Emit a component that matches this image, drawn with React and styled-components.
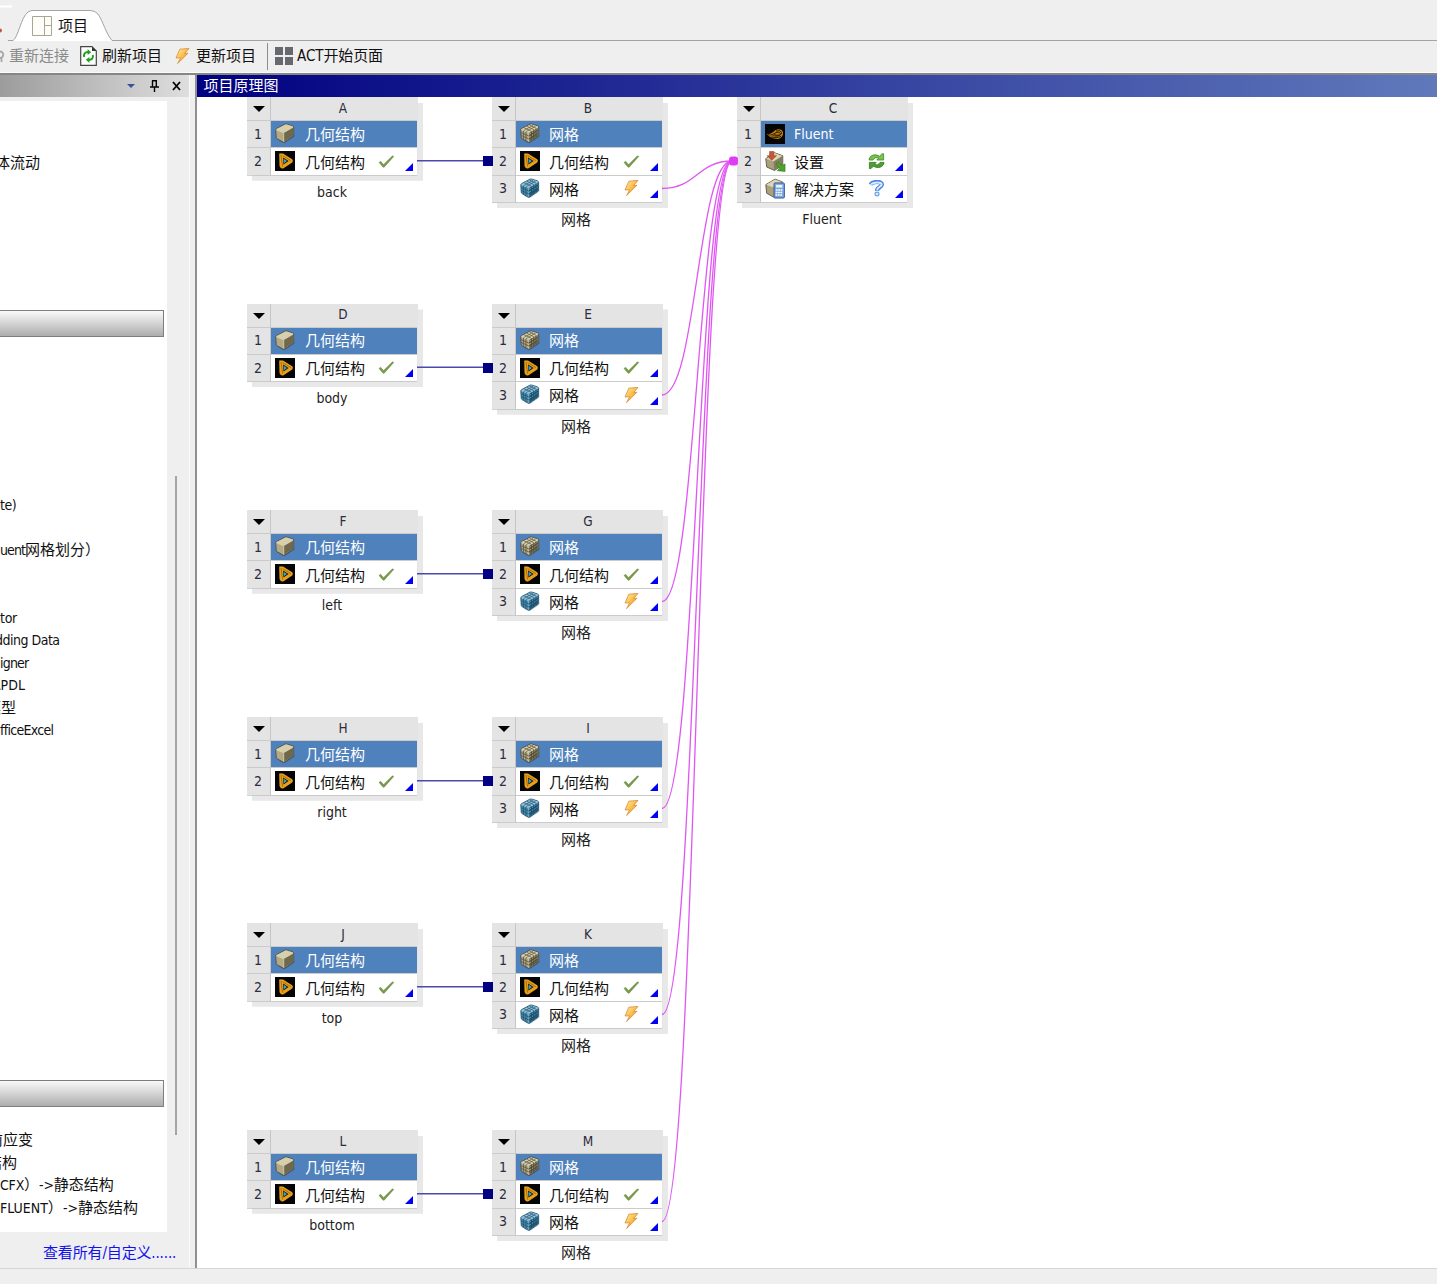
import React from "react";
import styled, { createGlobalStyle } from "styled-components";

const Global = createGlobalStyle`
  * { box-sizing: border-box; }
  html, body { margin: 0; padding: 0; background: #efefef; }
  body {
    overflow: hidden;
    font-family: "DejaVu Sans Condensed", "Noto Sans CJK SC", sans-serif;
    font-stretch: condensed;
    font-size: 14px;
    color: #111;
  }
  svg { display: block; flex: none; }
`;

/* ---------- icons ---------- */

const Cube = ({ tone, mesh }) => {
  const c = tone === "blue"
    ? { top: "#8fc0d8", front: "#4a8cb0", side: "#255f80", line: "#1b4a66", hi: "#9fd0e6" }
    : { top: "#d6cfae", front: "#b3aa85", side: "#6f684d", line: "#4b4532", hi: "#e0d9b8" };
  return (
    <svg width="20" height="21" viewBox="0 0 21 22">
      <path d="M4 18.5 10 21.2 20.4 14.5V12z" fill="#000" opacity=".2" />
      <path d="M.8 7.6Q.7 6.4 1.7 5.8L10.4 1.2Q11.4.8 12.4 1.1L18.4 3Q19.6 3.5 19.6 4.8V12.2Q19.6 13.4 18.7 14L10.4 19.9Q9.4 20.5 8.4 20L2.4 16.6Q1.4 16 1.3 15z" fill={c.front} stroke={c.line} strokeWidth=".8" />
      <path d="M1.5 7Q1.6 6.4 2.2 6L10.6 1.7Q11.4 1.3 12.2 1.6L18.2 3.5Q18.9 3.8 19 4.4L9.8 10.2 8.6 10z" fill={c.top} />
      <path d="M9.2 10.2 19.2 4.4V12.4Q19.1 13.2 18.5 13.7L9.5 20z" fill={c.side} />
      <path d="M1.6 7.2 8.4 10Q9.2 10.4 9.2 11.4V19.6M9 10.2 18.9 4.5" fill="none" stroke={c.hi} strokeWidth=".8" opacity=".9" />
      {mesh && (
        <g fill="none" opacity=".8">
          <path d="M3.6 8.3V16.8M6.2 9.3V18.4M1.4 10.2 9.2 13.6M1.6 13.2 9.3 16.7M12 8.8V18M14.4 7.4V16.5M16.8 6V14.8M9.2 13.6 19.3 7.2M9.3 16.8 19.3 10" stroke={c.line} strokeWidth=".9" />
          <path d="M4.4 5.1 11.8 8.5M7.3 3.5 14.6 7M10 2.1 17 5.5M3.8 8 13.6 2.5M6.4 9.1 16.3 3.3" stroke={c.line} strokeWidth=".8" />
          <path d="M10 11.6 11.4 10.8M12.7 10 13.8 9.3M15.1 8.6 16.2 7.9M17.4 7.2 18.5 6.4M10 14.8 11.4 13.9M12.7 13.1 13.8 12.4M15.1 11.6 16.2 10.9M17.4 10.1 18.5 9.4" stroke={c.hi} strokeWidth=".9" opacity=".75" />
        </g>
      )}
    </svg>
  );
};

const GeometryApp = () => (
  <svg width="20" height="20" viewBox="0 0 20 20">
    <rect width="20" height="20" fill="#050505" />
    <path d="M4.2 3.4Q4.2 2 5.6 2.4L8 2.6 17.2 8.2Q18.7 9.8 17.2 11.4L8.6 17.2Q6.8 18 5.6 16.8Q4.6 15.8 4.5 14.4z" fill="#e8a01a" />
    <path d="M8 6.6 13.6 10 8.5 13.6z" fill="#161208" />
    <path d="M8.6 7.8 12 10 8.9 12.2z" fill="#35a5d6" />
    <path d="M6 4 7.6 15.6M7.6 4.6 15.8 9.6" stroke="#8a5a08" strokeWidth=".7" fill="none" />
  </svg>
);

const FluentApp = () => (
  <svg width="20" height="20" viewBox="0 0 20 20">
    <rect width="20" height="20" fill="#050505" />
    <path d="M2 9.8C5 10.8 7 8.8 9.6 6.8 12 5 16.4 4.4 17.8 7.6 19 11 16.4 14.8 12.6 15 8.6 15.2 4 13.2 2 9.8z" fill="#bd7c10" />
    <path d="M3 10.6C7 12 9 9 12 8.4 14.4 8 15.8 9.2 15.4 10.6 14.6 12.8 9.8 12 7.6 11.6M9 9.8C11 12 15 11.8 17 9M6 12.8C9 14.2 13 13.8 16 12.4M11 7Q15 5.6 17 8.6" fill="none" stroke="#251500" strokeWidth=".9" />
  </svg>
);

const SetupIcon = () => (
  <svg width="21" height="21" viewBox="0 0 22 22">
    <path d="M.8 8 10 1.8 18.6 5V14.4L10 20.4 1.8 16.8z" fill="#aaa17c" stroke="#57503b" strokeWidth=".9" strokeLinejoin="round" />
    <path d="M1.3 8 10 2.2 18.2 5.2 9 11z" fill="#ddd6b6" />
    <path d="M9 11 18.4 5.2V14.2L9.6 20.2z" fill="#857d60" />
    <path d="M4.8.4h4.4V5H12L7 9.8 2.2 5h2.6z" fill="#c4573a" stroke="#9a3a22" strokeWidth=".6" />
    <path d="M11.4 13.6 13.8 11.6 17.8 15.2 21 13.6V21.4L13 20.6 15.2 17.8z" fill="#4ba52c" stroke="#2c7315" strokeWidth=".6" />
  </svg>
);

const SolutionIcon = () => (
  <svg width="21" height="21" viewBox="0 0 22 22">
    <path d="M.8 7 10.5 1.2 18 4V14L9 20 1.8 16z" fill="#aaa17c" stroke="#57503b" strokeWidth=".9" strokeLinejoin="round" />
    <path d="M1.3 7 10.5 1.6 17.6 4.3 8 9.8z" fill="#ddd6b6" />
    <rect x="9.5" y="5.2" width="10.8" height="15.8" rx="1" fill="#7ea6dc" stroke="#2c5798" />
    <rect x="11.6" y="7.2" width="6.6" height="2.8" fill="#e8f2fd" />
    <path d="M11.4 12.6h1.8m.7 0h1.8m.7 0h1.8m-7 2.6h1.8m.7 0h1.8m.7 0h1.8m-7 2.6h1.8m.7 0h1.8m.7 0h1.8" stroke="#fff" strokeWidth="1.7" />
  </svg>
);

const Check = () => (
  <svg width="17" height="14" viewBox="0 0 17 14">
    <path d="M1 7.4 2.6 6.2 5.6 9.6 14.4 .8 15.8 1.4 6.2 12.2H5z" fill="#7a9c4c" stroke="#5f8234" strokeWidth=".4" />
  </svg>
);

const Bolt = () => (
  <svg width="15" height="17" viewBox="0 0 15 17">
    <defs>
      <linearGradient id="bolt" x1="0" y1="0" x2="1" y2="1">
        <stop offset="0" stopColor="#fff0a8" />
        <stop offset=".5" stopColor="#f9bd4a" />
        <stop offset="1" stopColor="#d9720d" />
      </linearGradient>
    </defs>
    <path d="M4.8 1.2 14 .4 9.6 5.6 13 5.2 2.6 15.6 5.6 9.8 1 10z" fill="url(#bolt)" stroke="#d98c3a" strokeWidth=".8" strokeLinejoin="round" />
  </svg>
);

const Refresh = () => (
  <svg width="17" height="17" viewBox="0 0 17 17">
    <path d="M1 7C1.4 2.2 7 .4 11.6 3.2L14 .8H15.6V7H8.8L10.6 5C8.4 4.2 6 4.6 5 7z" fill="#7cc04f" stroke="#3a8a26" strokeWidth=".8" />
    <path d="M16 9.4C15.6 14.2 10 16 5.4 13.2L3 15.6H1.4V9.4H8.2L6.4 11.4C8.6 12.2 11 11.8 12 9.4z" fill="#4f9d33" stroke="#2d7a1c" strokeWidth=".8" />
  </svg>
);

const Question = () => (
  <svg width="16" height="17" viewBox="0 0 16 17">
    <path d="M1.4 4.6C3.4 1.2 13.2 1 12.9 4.6 12.6 7.4 8 7 8 11" fill="none" stroke="#4583de" strokeWidth="4.2" />
    <path d="M2 4.6C4 1.9 13 1.6 12.7 4.6 12.4 6.8 8 7 8 10.4" fill="none" stroke="#d9eaff" strokeWidth="2" />
    <rect x="6.1" y="12.2" width="3.8" height="3.6" rx="1" fill="#d9eaff" stroke="#4583de" />
  </svg>
);

const Caret = styled.i`
  width: 0;
  height: 0;
  border-left: ${(p) => p.$w / 2}px solid transparent;
  border-right: ${(p) => p.$w / 2}px solid transparent;
  border-top: ${(p) => p.$w / 2}px solid ${(p) => p.$c};
`;

/* ---------- frame ---------- */

const Window = styled.div`
  width: 1437px;
  height: 1284px;
  display: flex;
  flex-direction: column;
  background: #efefef;
  overflow: hidden;
`;

const TabStrip = styled.div`
  height: 41px;
  flex: none;
  position: relative;
  display: flex;
  overflow: hidden;
`;

const TabOutline = styled.svg`
  position: absolute;
  left: 0;
  top: 0;
`;

const TabLabel = styled.div`
  position: relative;
  display: flex;
  align-items: center;
  gap: 6px;
  height: 32px;
  margin: 10px 0 0 32px;
  font-size: 15px;

  span { margin-bottom: 3px; }
`;

const Toolbar = styled.div`
  height: 32px;
  flex: none;
  display: flex;
  align-items: center;
  padding-bottom: 1px;
  border-bottom: 1px solid #fafafa;
  font-size: 15px;
  white-space: nowrap;
`;

const Tool = styled.div`
  display: flex;
  align-items: center;
  gap: ${(p) => p.$gap}px;
  margin-left: ${(p) => p.$left}px;
  color: ${(p) => (p.$off ? "#8a8a8a" : "#111")};
  letter-spacing: ${(p) => p.$ls || 0}px;

  span { margin-bottom: 3px; }
`;

const ToolRule = styled.div`
  width: 1px;
  height: 27px;
  margin-left: 11px;
  background: #8d8d8d;
`;

const Body = styled.div`
  height: 1195px;
  flex: none;
  display: flex;
  border-top: 2px solid #868686;
`;

const Side = styled.aside`
  width: 190px;
  flex: none;
  display: flex;
  flex-direction: column;
  border-right: 1px solid #fafafa;
`;

const SideHead = styled.div`
  height: 22px;
  flex: none;
  display: flex;
  align-items: center;
  justify-content: flex-end;
  gap: 13px;
  padding-right: 8px;
  background: linear-gradient(90deg, #9c9c9c, #dedede);

  i { margin-right: 2px; }
`;

const SideMain = styled.div`
  display: flex;
  height: 1131px;
  margin-top: 4px;
`;

const SideList = styled.div`
  width: 167px;
  height: 1131px;
  background: #fff;
  overflow: hidden;
  display: flex;
  flex-direction: column;
  padding-top: 51px;
`;

const SideItem = styled.div`
  height: 22.5px;
  flex: none;
  line-height: 22.5px;
  margin-top: ${(p) => p.$top || 0}px;
  margin-left: ${(p) => p.$shift || 0}px;
  letter-spacing: ${(p) => p.$ls || 0}px;
  white-space: pre;

  b { font-weight: 400; font-size: 15px; letter-spacing: 0; }
`;

const SideGroup = styled.div`
  width: 164px;
  height: 27px;
  flex: none;
  margin-top: ${(p) => p.$top}px;
  border: 1px solid #7e7e7e;
  border-left: 0;
  background: linear-gradient(#fafafa, #adadad);
`;

const ScrollTrack = styled.div`
  width: 22px;
  padding: 375px 0 0 8px;
`;

const ScrollThumb = styled.div`
  width: 2px;
  height: 659px;
  background: #a5a5a5;
`;

const SideLink = styled.a`
  display: block;
  padding-left: 43px;
  height: 36px;
  line-height: 42px;
  font-size: 15px;
  letter-spacing: -0.15px;
  color: #1212ee;
  white-space: nowrap;
`;

const Main = styled.main`
  flex: 1;
  margin-left: 5px;
  border-left: 2px solid #909090;
  display: flex;
  flex-direction: column;
`;

const MainHead = styled.div`
  height: 22px;
  flex: none;
  line-height: 22px;
  padding-left: 6.5px;
  font-size: 15px;
  color: #fff;
  background: linear-gradient(90deg, #000080, #6079bb);
`;

const Canvas = styled.div`
  flex: 1;
  position: relative;
  background: #fff;
  overflow: hidden;
`;

const StatusBar = styled.div`
  flex: 1;
  border-top: 1px solid #d6d6d6;
`;

/* ---------- systems ---------- */

const Node = styled.div`
  position: absolute;
  left: ${(p) => p.$x}px;
  top: ${(p) => p.$y}px;
  width: 171px;
`;

const Card = styled.div`
  width: 171px;
  background: #e4e4e4;
  box-shadow: 5px 5px 0 #e8e8e8;
  padding-right: 1px;
  clip-path: polygon(0 0, 100% 0, 100% 6px, calc(100% + 5px) 6px, calc(100% + 5px) calc(100% + 5px), 5px calc(100% + 5px), 5px 100%, 0 100%);
`;

const Line = styled.div`
  display: flex;
  height: ${(p) => (p.$head ? 24 : 27.4)}px;
`;

const Num = styled.div`
  width: 24px;
  flex: none;
  display: flex;
  align-items: center;
  justify-content: center;
  border-right: 1px solid #c6c6c6;
  border-bottom: 1px solid #cbcbcb;
  color: #2c2c3c;
  padding: ${(p) => (p.$caret ? "1px 0 0 0" : "0 1px 1px 0")};
`;

const Letter = styled.div`
  flex: 1;
  display: flex;
  align-items: center;
  justify-content: center;
  padding: 0 2px 2px 0;
  border-bottom: 1px solid #cbcbcb;
  color: #2c2c3c;
  font-size: 13.5px;
`;

const Cell = styled.div`
  flex: 1;
  display: flex;
  align-items: center;
  padding-left: 4px;
  font-size: ${(p) => (p.$latin ? 14 : 15)}px;
  color: ${(p) => (p.$title ? "#fff" : "#111")};
  background: ${(p) => (p.$title ? "#4f81bc" : "#fff")};
  border-bottom: 1px solid #cbcbcb;
  white-space: nowrap;
`;

const IconSlot = styled.span`
  width: 21px;
  flex: none;
  margin-bottom: 1px;
`;

const CellText = styled.span`
  width: ${(p) => p.$w}px;
  flex: none;
  margin-left: ${(p) => p.$gap}px;
  margin-bottom: ${(p) => (p.$title ? 2 : 1)}px;
`;

const StateSlot = styled.span`
  width: 17px;
  flex: none;
  display: flex;
  justify-content: center;
`;

const Corner = styled.i`
  align-self: flex-end;
  margin: 0 0 4px 10px;
  border-left: 8px solid transparent;
  border-bottom: 8px solid #0000f5;
`;

const Caption = styled.div`
  margin-top: ${(p) => (p.$cjk ? 7 : 6)}px;
  width: ${(p) => (p.$cjk ? 168 : 170)}px;
  text-align: center;
  line-height: 20px;
  font-size: ${(p) => (p.$cjk ? 15 : 14)}px;
  color: #222;
`;

const Links = styled.svg`
  position: absolute;
  left: 0;
  top: 0;
`;

const icons = {
  geo: <Cube />,
  mesh: <Cube mesh />,
  meshBlue: <Cube mesh tone="blue" />,
  app: <GeometryApp />,
  fluent: <FluentApp />,
  setup: <SetupIcon />,
  solution: <SolutionIcon />,
};
const states = { ok: <Check />, bolt: <Bolt />, refresh: <Refresh />, ask: <Question /> };

const geometryRows = [
  { icon: "geo", text: "几何结构", title: true },
  { icon: "app", text: "几何结构", state: "ok" },
];
const meshRows = [
  { icon: "mesh", text: "网格", title: true },
  { icon: "app", text: "几何结构", state: "ok" },
  { icon: "meshBlue", text: "网格", state: "bolt" },
];
const fluentRows = [
  { icon: "fluent", text: "Fluent", title: true, latin: true },
  { icon: "setup", text: "设置", state: "refresh" },
  { icon: "solution", text: "解决方案", state: "ask" },
];

const System = ({ x, y, letter, rows, caption, gap, cjk }) => (
  <Node $x={x} $y={y}>
    <Card>
      <Line $head>
        <Num $caret><Caret $w={12} $c="#000" /></Num>
        <Letter>{letter}</Letter>
      </Line>
      {rows.map((r, i) => (
        <Line key={i}>
          <Num>{i + 1}</Num>
          <Cell $title={r.title} $latin={r.latin}>
            <IconSlot>{icons[r.icon]}</IconSlot>
            <CellText $gap={gap} $w={82 - gap} $title={r.title && !r.latin}>{r.text}</CellText>
            {r.state && <StateSlot>{states[r.state]}</StateSlot>}
            {r.state && <Corner />}
          </Cell>
        </Line>
      ))}
    </Card>
    <Caption $cjk={cjk}>{caption}</Caption>
  </Node>
);

const pairs = [
  ["A", "B", "back", 0],
  ["D", "E", "body", 206.5],
  ["F", "G", "left", 413],
  ["H", "I", "right", 620],
  ["J", "K", "top", 826],
  ["L", "M", "bottom", 1033],
];

export default function App() {
  return (
    <>
      <Global />
      <Window>
        <TabStrip>
          <TabOutline width="1437" height="41" viewBox="0 0 1437 41">
            <path d="M0 6.5H12" stroke="#fff" strokeWidth="2" />
            <circle cx="0" cy="30.5" r="2" fill="#c0563c" />
            <path d="M8 40.5H13C18 38 21 17 28 12Q30 10.5 33 10.5H90Q95 10.5 98 14C103 21 106 34 112 40.5H1437V41H8z" fill="#fff" />
            <path d="M8 40.5H13C18 38 21 17 28 12Q30 10.5 33 10.5H90Q95 10.5 98 14C103 21 106 34 112 40.5H1437" fill="none" stroke="#a3a3a3" />
          </TabOutline>
          <TabLabel>
            <svg width="20" height="20" viewBox="0 0 20 20">
              <path d="M.5.5h19v19H.5zM12.5.5v19M12.5 9.5h7" fill="#fdfdfa" stroke="#aaa590" />
            </svg>
            <span>项目</span>
          </TabLabel>
        </TabStrip>
        <Toolbar>
          <Tool $left={0} $gap={4} $off>
            <svg width="5" height="14" viewBox="0 0 5 14">
              <path d="M0 2.5A3.2 3.2 0 0 1 0 9M1.5 9v4" fill="none" stroke="#a8a8a8" strokeWidth="1.8" />
            </svg>
            <span>重新连接</span>
          </Tool>
          <Tool $left={11} $gap={5}>
            <svg width="17" height="20" viewBox="0 0 17 20">
              <path d="M.7.7H12L16.3 5V19.3H.7z" fill="#fff" stroke="#444" strokeWidth="1.2" />
              <path d="M12 .7V5h4.3z" fill="#333" />
              <path d="M4.2 11C3.4 7.6 5.4 5.8 8.2 6" fill="none" stroke="#22a022" strokeWidth="2" />
              <path d="M7.6 3 11.2 6.2 7.6 9zM9.4 11 5.8 13.8 9.4 17z" fill="#22a022" />
              <path d="M12.8 9C13.6 12.4 11.6 14 8.8 13.9" fill="none" stroke="#22a022" strokeWidth="2" />
            </svg>
            <span>刷新项目</span>
          </Tool>
          <Tool $left={13} $gap={6}>
            <Bolt />
            <span>更新项目</span>
          </Tool>
          <ToolRule />
          <Tool $left={7} $gap={4} $ls={-0.1}>
            <svg width="18" height="18" viewBox="0 0 18 18">
              <path d="M0 0h8v8H0zM10 0h8v8h-8zM0 10h8v8H0zM10 10h8v8h-8z" fill="#68696d" />
            </svg>
            <span>ACT开始页面</span>
          </Tool>
        </Toolbar>
        <Body>
          <Side>
            <SideHead>
              <Caret $w={8} $c="#3a4f9c" />
              <svg width="9" height="12" viewBox="0 0 9 12">
                <path d="M2 .8h5M2.5.5v6M6.3.5v6M0 7h9M4.5 7v5" fill="none" stroke="#000" strokeWidth="1.4" />
              </svg>
              <svg width="9" height="10" viewBox="0 0 9 10">
                <path d="M1 1 8 9M8 1 1 9" stroke="#000" strokeWidth="1.8" />
              </svg>
            </SideHead>
            <SideMain>
              <SideList>
                <SideItem $shift={-5}><b>体流动</b></SideItem>
                <SideGroup $top={135.5} />
                <SideItem $top={157} $ls={-0.5}>te)</SideItem>
                <SideItem $top={22.5} $ls={-0.9}>uent<b>网格划分）</b></SideItem>
                <SideItem $top={45} $ls={-0.3}>tor</SideItem>
                <SideItem $shift={-5} $ls={-0.5}>dding Data</SideItem>
                <SideItem $ls={-0.8}>igner</SideItem>
                <SideItem $shift={-8}>APDL</SideItem>
                <SideItem $shift={-14}><b>模型</b></SideItem>
                <SideItem $ls={-0.7}>fficeExcel</SideItem>
                <SideGroup $top={338} />
                <SideItem $top={22.5} $shift={-12}><b>前应变</b></SideItem>
                <SideItem $shift={-13}><b>结构</b></SideItem>
                <SideItem $ls={-0.2}>CFX<b>）</b>-&gt;<b>静态结构</b></SideItem>
                <SideItem>FLUENT<b>）</b>-&gt;<b>静态结构</b></SideItem>
              </SideList>
              <ScrollTrack><ScrollThumb /></ScrollTrack>
            </SideMain>
            <SideLink>查看所有/自定义......</SideLink>
          </Side>
          <Main>
            <MainHead>项目原理图</MainHead>
            <Canvas>
              {pairs.map(([a, b, name, y]) => (
                <React.Fragment key={a}>
                  <System x={50} y={y} letter={a} rows={geometryRows} caption={name} gap={9} />
                  <System x={295} y={y} letter={b} rows={meshRows} caption="网格" gap={8} cjk />
                </React.Fragment>
              ))}
              <System x={540} y={0} letter="C" rows={fluentRows} caption="Fluent" gap={8} />
              <Links width="1240" height="1171" viewBox="0 0 1240 1171">
                {pairs.map(([a, , , y]) => (
                  <g key={a}>
                    <path d={`M220 ${y + 63.8}H290`} stroke="#4a4aae" strokeWidth="1.4" />
                    <rect x="286" y={Math.round(y + 59)} width="10" height="10" fill="#000080" />
                    <path d={`M465 ${y + 91.5}C500 ${y + 91.5} 500 64 535 64`} fill="none" stroke="#e056f3" strokeWidth="1.3" />
                  </g>
                ))}
                <rect x="532" y="59.5" width="9" height="9" rx="3" fill="#e03cf5" />
              </Links>
            </Canvas>
          </Main>
        </Body>
        <StatusBar />
      </Window>
    </>
  );
}
